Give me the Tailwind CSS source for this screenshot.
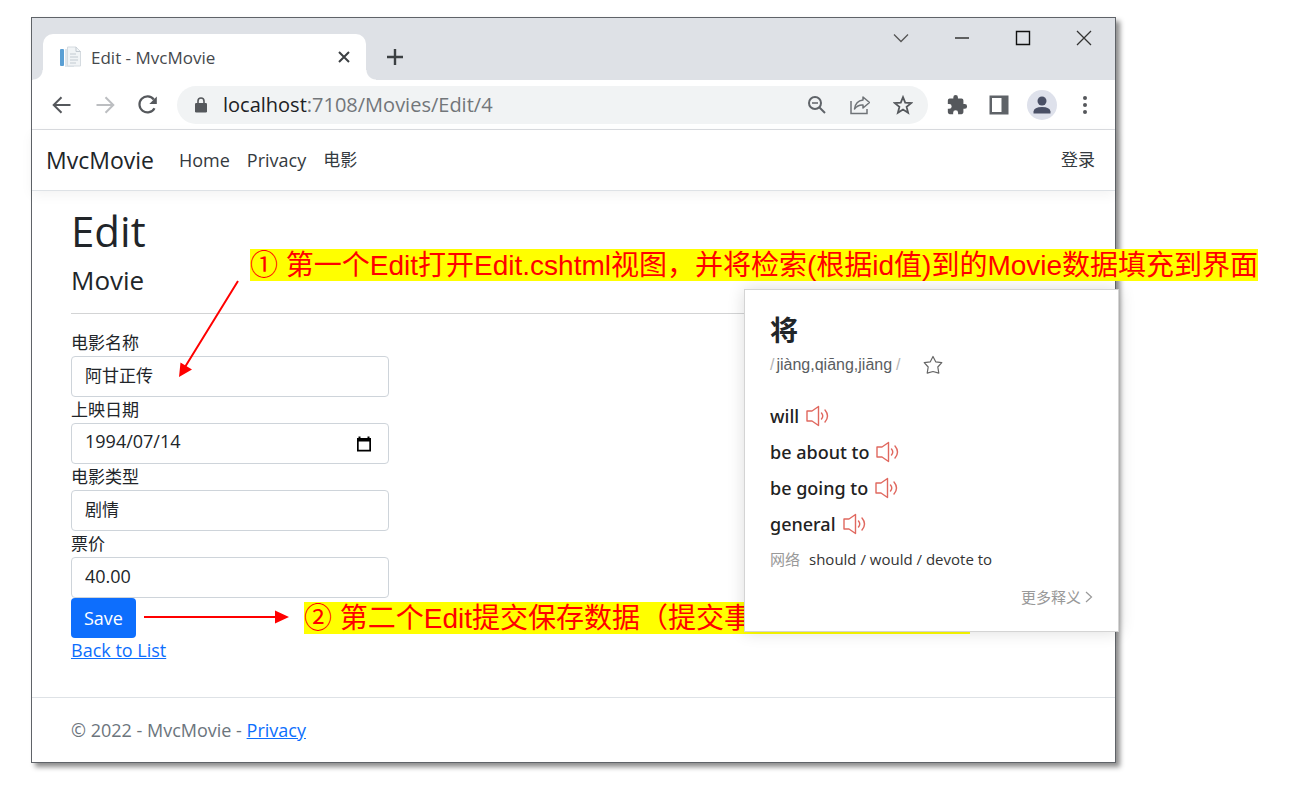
<!DOCTYPE html>
<html lang="zh-CN">
<head>
<meta charset="utf-8">
<meta name="viewport" content="width=device-width, initial-scale=1">
<title>Edit - MvcMovie</title>
<script src="https://cdn.jsdelivr.net/npm/@tailwindcss/browser@4"></script>
</head>
<body class="relative min-h-screen overflow-x-hidden bg-white pt-[17px] pr-[185px] pb-7 pl-[31px] font-['Open_Sans','Noto_Sans_CJK_SC',sans-serif] text-[18px] text-[#212529]">

<svg class="hidden" aria-hidden="true">
  <symbol id="speaker" viewBox="0 0 24 22">
    <path d="M2 6H7L13.500 1.500V20.500L7 16H2Z" fill="none" stroke="#e0685f" stroke-width="1.400" stroke-linejoin="round"/>
    <path d="M16.500 8Q19 11 16.500 14M20 5Q25 11 20 17" fill="none" stroke="#e0685f" stroke-width="1.400" stroke-linecap="round"/>
  </symbol>
</svg>

<div class="border border-[#5f6368] bg-white shadow-[4px_4px_5px_rgba(0,0,0,0.45)]">
  <!-- Title bar -->
  <header class="flex h-[62px] items-start justify-between bg-[#dee1e6] pl-[11px]">
    <div class="flex items-center pt-4">
      <div class="relative flex h-[46px] w-[323px] items-center rounded-t-[10px] bg-white pr-3 pl-4">
        <span class="absolute bottom-0 -left-[10px] size-[10px] bg-[radial-gradient(circle_at_0_0,#dee1e6_9px,#fff_10px)]"></span>
        <span class="absolute -right-[10px] bottom-0 size-[10px] bg-[radial-gradient(circle_at_100%_0,#dee1e6_9px,#fff_10px)]"></span>
        <svg class="size-[22px]" viewBox="0 0 22 22" aria-hidden="true">
          <rect x="1" y="3" width="4" height="17" rx="1" fill="#5a9fd4"/>
          <path d="M6 3H15V21H6Z" fill="#dfe6ec"/>
          <path d="M8.500 1H17L21.500 5.500V20H8.500Z" fill="#f1f4f6" stroke="#d5dbe0"/>
          <path d="M17 1V5.500H21.500M11 8H17M11 11H19M11 14H19M11 17H17" fill="none" stroke="#c2cad1"/>
        </svg>
        <span class="ml-[10px] flex-1 pt-[2px] text-[17px] text-[#45484c]">Edit - MvcMovie</span>
        <button type="button" aria-label="Close tab" class="p-1">
          <svg class="size-3" viewBox="0 0 12 12" fill="none" stroke="#3c4043" stroke-width="2"><path d="M1 1L11 11M11 1L1 11"/></svg>
        </button>
      </div>
      <button type="button" aria-label="New tab" class="ml-5">
        <svg class="size-[18px]" viewBox="0 0 18 18" fill="none" stroke="#3c4043" stroke-width="2.400"><path d="M9 1V17M1 9H17"/></svg>
      </button>
    </div>
    <div class="flex items-center gap-[45px] pt-3 pr-[23px]">
      <button type="button" aria-label="Search tabs"><svg class="size-4" viewBox="0 0 16 16" fill="none" stroke="#555" stroke-width="1.300"><path d="M1 4.500L8 11.500L15 4.500"/></svg></button>
      <button type="button" aria-label="Minimize"><svg class="size-4" viewBox="0 0 16 16" fill="none" stroke="#333" stroke-width="1.500"><path d="M1 8H15"/></svg></button>
      <button type="button" aria-label="Maximize"><svg class="size-4" viewBox="0 0 16 16" fill="none" stroke="#111" stroke-width="1.400"><path d="M1.500 1.500H14.500V14.500H1.500Z"/></svg></button>
      <button type="button" aria-label="Close"><svg class="size-4" viewBox="0 0 16 16" fill="none" stroke="#333" stroke-width="1.300"><path d="M1 1L15 15M15 1L1 15"/></svg></button>
    </div>
  </header>

  <!-- Toolbar -->
  <div class="flex h-[50px] items-center border-b border-[#dadce0] pr-5 pl-5">
    <div class="flex items-center gap-[23px]">
      <button type="button" aria-label="Back"><svg class="size-5" viewBox="0 0 20 20" fill="none" stroke="#55585c" stroke-width="2"><path d="M18.500 10H2M9.500 2.200L1.700 10L9.500 17.800"/></svg></button>
      <button type="button" aria-label="Forward"><svg class="size-5" viewBox="0 0 20 20" fill="none" stroke="#bcbec1" stroke-width="2"><path d="M1.500 10H18M10.500 2.200L18.300 10L10.500 17.800"/></svg></button>
      <button type="button" aria-label="Reload"><svg class="size-5" viewBox="0 0 20 20"><path d="M16.500 13.200A8 8 0 1 1 15.800 4.500" fill="none" stroke="#55585c" stroke-width="2.200"/><path d="M18.800 1.500V9H11.300Z" fill="#55585c"/></svg></button>
    </div>
    <div class="ml-[19px] flex h-[38px] flex-1 items-center rounded-full bg-[#f1f3f4] pr-[15px] pl-[18px]">
      <svg class="h-4 w-3" viewBox="0 0 12 16" aria-hidden="true"><rect y="6" width="12" height="9.500" rx="1.300" fill="#55585c"/><path d="M3 6V4A3 3 0 0 1 9 4V6" fill="none" stroke="#55585c" stroke-width="1.600"/></svg>
      <div role="textbox" contenteditable="true" aria-label="Address" class="ml-4 flex-1 text-[20px] text-[#72767a] outline-none"><span class="text-[#202124]">localhost</span>:7108/Movies/Edit/4</div>
      <div class="flex items-center gap-[23px]">
        <button type="button" aria-label="Zoom"><svg class="size-5" viewBox="0 0 20 20" fill="none" stroke="#5f6368" stroke-width="2"><circle cx="8" cy="8" r="6"/><path d="M5 8H11" stroke-width="1.500"/><path d="M12.500 12.500L18 18"/></svg></button>
        <button type="button" aria-label="Share"><svg class="size-5" viewBox="0 0 20 20" fill="none" stroke="#6f7377" stroke-width="1.500"><path d="M1 6V18.500H17V14"/><path d="M13 2L19.500 7.500L13 13V10Q8 9.500 4.500 14Q5.500 6 13 5Z" stroke-linejoin="round"/></svg></button>
        <button type="button" aria-label="Bookmark"><svg class="size-5" viewBox="0 0 20 20" fill="none" stroke="#55585c" stroke-width="1.800"><path d="M10 2.200L12.200 7.700L18.200 8.100L13.600 11.900L15.100 17.700L10 14.500L4.900 17.700L6.400 11.900L1.800 8.100L7.800 7.700Z"/></svg></button>
      </div>
    </div>
    <div class="ml-[18px] flex items-center">
      <button type="button" aria-label="Extensions"><svg class="size-[22px]" viewBox="0 0 24 24" fill="#55585c"><path d="M20.500 11H19V7a2 2 0 0 0-2-2h-4V3.500a2.500 2.500 0 0 0-5 0V5H4a2 2 0 0 0-2 2v3.800h1.500a2.700 2.700 0 0 1 0 5.400H2V20a2 2 0 0 0 2 2h3.800v-1.500a2.700 2.700 0 0 1 5.400 0V22H17a2 2 0 0 0 2-2v-4h1.500a2.500 2.500 0 0 0 0-5Z"/></svg></button>
      <button type="button" aria-label="Side panel" class="ml-[21px]"><svg class="size-5" viewBox="0 0 20 20"><path fill="#5f6368" fill-rule="evenodd" d="M0.500 0.500H19.500V19.500H0.500ZM3 3V17H12.500V3Z"/></svg></button>
      <button type="button" aria-label="Profile" class="ml-[18px]"><svg class="size-[30px]" viewBox="0 0 30 30"><circle cx="15" cy="15" r="15" fill="#dee1eb"/><circle cx="15" cy="11" r="4.500" fill="#4a5066"/><path d="M6.500 23.500V21.500Q7 17 15 17T23.500 21.500V23.500Z" fill="#4a5066"/></svg></button>
      <button type="button" aria-label="Menu" class="ml-[18px]"><svg class="size-5" viewBox="0 0 20 20" fill="#55585c"><circle cx="10" cy="3" r="2"/><circle cx="10" cy="10" r="2"/><circle cx="10" cy="17" r="2"/></svg></button>
    </div>
  </div>

  <!-- Site navigation -->
  <nav class="flex h-[61px] items-center border-b border-[#dee2e6] pr-5 pl-[14px] shadow-[0_4px_12px_rgba(0,0,0,0.05)]">
    <a href="#" class="text-[23px] text-[#212529]">MvcMovie</a>
    <a href="#" class="ml-[25px] text-[#343a40]">Home</a>
    <a href="#" class="ml-[17px] text-[#343a40]">Privacy</a>
    <a href="#" class="ml-[17px] text-[17px] text-[#343a40]">电影</a>
    <a href="#" class="ml-auto text-[17px] text-[#343a40]">登录</a>
  </nav>

  <!-- Edit form -->
  <main class="px-[39px] pt-[13px] pb-[34px]">
    <h1 class="text-[42px] leading-[53px]">Edit</h1>
    <h4 class="mt-[7px] text-[26px] leading-8">Movie</h4>
    <hr class="mt-[17px] border-[#d3d4d5]">
    <form class="mt-4 grid grid-cols-3 gap-[26px]" onsubmit="return false">
      <div class="flex flex-col">
        <label for="title" class="text-[17px] leading-[26px]">电影名称</label>
        <input id="title" type="text" value="阿甘正传" class="h-[41px] rounded border border-[#ced4da] px-[13px] pb-1 text-[17px]">
        <label for="date" class="text-[17px] leading-[26px]">上映日期</label>
        <div class="flex h-[41px] items-center rounded border border-[#ced4da] pr-4 pl-[13px]">
          <input id="date" type="text" value="1994/07/14" class="min-w-0 flex-1 pb-1 outline-none">
          <button type="button" aria-label="Choose date"><svg class="size-4" viewBox="0 0 16 16"><path fill="#000" fill-rule="evenodd" d="M2.500 0.500H4.500V2H11.500V0.500H13.500V2H15V15.500H1V2H2.500ZM2.700 5.500V13.800H13.300V5.500Z"/></svg></button>
        </div>
        <label for="genre" class="text-[17px] leading-[26px]">电影类型</label>
        <input id="genre" type="text" value="剧情" class="h-[41px] rounded border border-[#ced4da] px-[13px] pb-1 text-[17px]">
        <label for="price" class="text-[17px] leading-[26px]">票价</label>
        <input id="price" type="text" value="40.00" class="h-[41px] rounded border border-[#ced4da] px-[13px] pb-1">
        <button type="submit" class="h-10 self-start rounded bg-[#0d6efd] px-[13px] text-white">Save</button>
        <a href="#" class="self-start leading-[25px] text-[#0d6efd] underline">Back to List</a>
      </div>
    </form>
  </main>

  <footer class="flex h-[65px] items-center border-t border-[#dee2e6] px-[39px] text-[#6c757d]">
    <p>© 2022 - MvcMovie - <a href="#" class="text-[#0d6efd] underline">Privacy</a></p>
  </footer>
</div>

<!-- Annotations laid over the window -->
<svg class="pointer-events-none absolute top-[275px] left-[140px] h-[360px] w-[160px]" viewBox="0 0 160 360" aria-hidden="true">
  <path d="M98 6L45 92M4 342H136" stroke="#f00" stroke-width="2" fill="none"/>
  <path d="M39 102L40.500 87.500L52 94.500ZM149 342L135 335.500V348.500Z" fill="#f00"/>
</svg>
<p class="absolute top-[249px] left-[250px] h-8 bg-[#ff0] font-['Liberation_Sans','Noto_Sans_CJK_SC',sans-serif] text-[28px] leading-[34px] whitespace-nowrap text-[#f00]">① 第一个Edit打开Edit.cshtml视图，并将检索(根据id值)到的Movie数据填充到界面</p>
<p class="absolute top-[602px] left-[304px] h-8 w-[666px] bg-[#ff0] font-['Liberation_Sans','Noto_Sans_CJK_SC',sans-serif] text-[28px] leading-[34px] whitespace-nowrap text-[#f00]">② 第二个Edit提交保存数据（提交事</p>

<!-- Dictionary popup -->
<aside class="absolute top-[289px] left-[744px] flex h-[343px] w-[375px] flex-col border border-[#d4d4d4] bg-white px-[25px] pt-5 shadow-[0_0_16px_rgba(0,0,0,0.14)]">
  <h2 class="text-[28px] leading-10 font-bold">将</h2>
  <div class="flex h-[30px] items-center font-['Liberation_Sans',sans-serif] text-base text-[#5a5d61]">
    <span class="mr-[2px] text-[#b5b5b5]">/</span>jiàng,qiāng,jiāng<span class="ml-1 text-[#b5b5b5]">/</span>
    <button type="button" aria-label="Add to favourites" class="ml-[22px]"><svg class="size-5" viewBox="0 0 20 20" fill="none" stroke="#666" stroke-width="1.200" stroke-linejoin="round"><path d="M10 1.500L12.700 6.800L18.800 7.700L14.800 12L15.800 18.200L10 16.500L4.200 18.200L5.200 12L1.200 7.700L7.300 6.800Z"/></svg></button>
  </div>
  <ul class="mt-[18px] font-['Noto_Sans',sans-serif] text-[18px] font-medium text-[#222]">
    <li class="flex h-9 items-center gap-[6px]">will<button type="button" aria-label="Play will"><svg class="h-[22px] w-6"><use href="#speaker"/></svg></button></li>
    <li class="flex h-9 items-center gap-[6px]">be about to<button type="button" aria-label="Play be about to"><svg class="h-[22px] w-6"><use href="#speaker"/></svg></button></li>
    <li class="flex h-9 items-center gap-[6px]">be going to<button type="button" aria-label="Play be going to"><svg class="h-[22px] w-6"><use href="#speaker"/></svg></button></li>
    <li class="flex h-9 items-center gap-[6px]">general<button type="button" aria-label="Play general"><svg class="h-[22px] w-6"><use href="#speaker"/></svg></button></li>
  </ul>
  <p class="mt-1 text-[15px] leading-[26px] text-[#333]"><span class="mr-[9px] text-[#999]">网络</span>should / would / devote to</p>
  <a href="#" class="mt-3 flex items-center gap-1 self-end text-[15px] leading-[26px] text-[#999]">更多释义<svg class="h-3 w-2" viewBox="0 0 8 12" fill="none" stroke="#999" stroke-width="1.200"><path d="M1 1L6.500 6L1 11"/></svg></a>
</aside>
</body>
</html>
